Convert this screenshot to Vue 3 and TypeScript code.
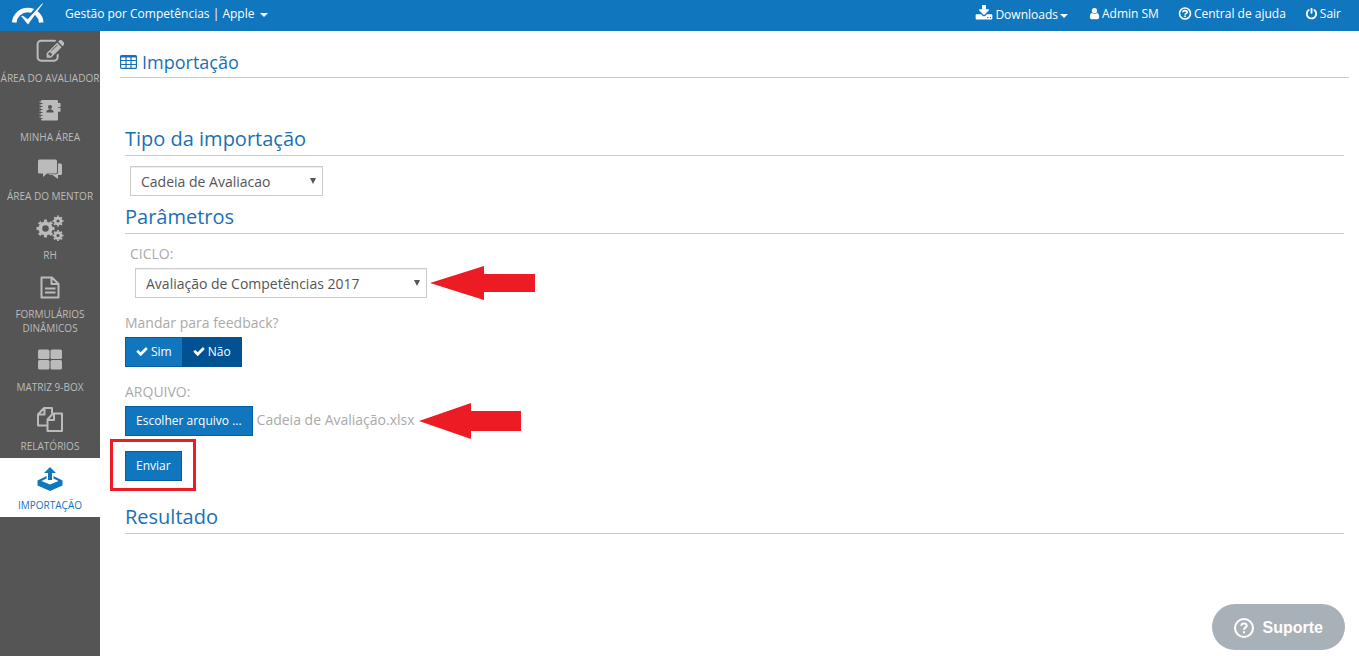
<script setup lang="ts">
import { ref } from 'vue'

interface MenuItem {
  id: string
  label: string
}

const menu: MenuItem[] = [
  { id: 'edit', label: 'Área do avaliador' },
  { id: 'book', label: 'Minha área' },
  { id: 'chat', label: 'Área do mentor' },
  { id: 'gears', label: 'RH' },
  { id: 'file', label: 'Formulários dinâmicos' },
  { id: 'grid', label: 'Matriz 9-Box' },
  { id: 'copy', label: 'Relatórios' },
  { id: 'upload', label: 'Importação' },
]

const active = ref('upload')
const importType = ref('Cadeia de Avaliacao')
const cycle = ref('Avaliação de Competências 2017')
const feedback = ref('Não')
const fileName = ref('Cadeia de Avaliação.xlsx')

function pickFile(event: Event): void {
  const files = (event.target as HTMLInputElement).files
  if (files && files.length) fileName.value = files[0].name
}
</script>

<template>
  <div class="page">
    <header class="topbar">
      <a class="logo" href="#" aria-label="Início">
        <svg width="34" height="22" viewBox="0 0 34 22">
          <path d="M3.200 19.500A13.600 13.600 0 0 1 30.300 19.500" fill="none" stroke="#fff" stroke-width="4.600" />
          <path d="M18 15L31.200-.8" fill="none" stroke="#1076be" stroke-width="3.600" />
          <path d="M10 13l2-.3 4.700 3.600L31.400.3l.5.500L17 21.500z" fill="#fff" />
        </svg>
      </a>
      <button class="link company" type="button">Gestão por Competências | Apple <span class="caret"></span></button>
      <nav class="tools">
        <button class="link downloads" type="button">
          <svg width="18" height="18" viewBox="0 100 1792 1792" fill="currentColor"><path d="M1344 1344q0-26-19-45t-45-19-45 19-19 45 19 45 45 19 45-19 19-45zm256 0q0-26-19-45t-45-19-45 19-19 45 19 45 45 19 45-19 19-45zm128-224v320q0 40-28 68t-68 28h-1472q-40 0-68-28t-28-68v-320q0-40 28-68t68-28h465l135 136q58 56 136 56t136-56l136-136h464q40 0 68 28t28 68zm-325-569q17 41-14 70l-448 448q-18 19-45 19t-45-19l-448-448q-31-29-14-70 17-39 59-39h256v-448q0-26 19-45t45-19h256q26 0 45 19t19 45v448h256q42 0 59 39z" /></svg>
          <span class="tool-text">Downloads</span><span class="caret"></span>
        </button>
        <a class="link" href="#">
          <svg width="11" height="12" viewBox="192 128 1408 1650" fill="currentColor"><path d="M1536 1399q0 109-62.500 187t-150.500 78h-854q-88 0-150.500-78t-62.500-187q0-85 8.500-160.500t31.500-152 58.500-131 94-89 134.500-34.500q131 128 313 128t313-128q76 0 134.500 34.500t94 89 58.500 131 31.500 152 8.500 160.500zm-256-887q0 159-112.500 271.500t-271.500 112.500-271.500-112.500-112.500-271.500 112.500-271.500 271.500-112.500 271.500 112.500 112.500 271.500z" /></svg>
          Admin SM
        </a>
        <a class="link" href="#">
          <svg width="14" height="14" viewBox="0 0 14 14" fill="none" stroke="currentColor"><circle cx="7" cy="6.500" r="5.500" stroke-width="1.600" /><path d="M4.900 5.200c.2-2.300 4.300-2.100 4.300 0 0 1.200-2.100 1.200-2.100 2.600M7.100 8.600v1.500" stroke-width="1.700" /></svg>
          Central de ajuda
        </a>
        <a class="link" href="#">
          <svg width="13" height="13" viewBox="0 100 1792 1792" fill="currentColor"><path d="M1664 896q0 156-61 298t-164 245-245 164-298 61-298-61-245-164-164-245-61-298q0-182 80.500-343t226.500-270q43-32 95.500-25t83.500 50q32 42 24.500 94.500t-49.500 84.500q-98 74-151.500 181t-53.500 228q0 104 40.500 198.500t109.500 163.500 163.500 109.500 198.500 40.500 198.500-40.500 163.500-109.500 109.500-163.500 40.500-198.500q0-121-53.500-228t-151.500-181q-42-32-49.500-84.500t24.500-94.500q31-43 84-50t95 25q146 109 226.500 270t80.500 343zm-640-768v640q0 52-38 90t-90 38-90-38-38-90v-640q0-52 38-90t90-38 90 38 38 90z" /></svg>
          Sair
        </a>
      </nav>
    </header>

    <div class="body">
      <nav class="sidebar">
        <a v-for="item in menu" :key="item.id" href="#" class="item" :class="{ active: item.id === active }" @click.prevent="active = item.id">
          <svg v-if="item.id === 'edit'" width="28" height="28" viewBox="-40 -40 1792 1792" fill="currentColor"><path d="M888 1184l116-116-152-152-116 116v56h96v96h56zm440-720q-16-16-33 1l-350 350q-17 17-1 33t33-1l350-350q17-17 1-33zm80 594v190q0 119-84.500 203.500t-203.500 84.500h-832q-119 0-203.500-84.500t-84.500-203.500v-832q0-119 84.500-203.500t203.500-84.500h832q63 0 117 25 15 7 18 23 3 17-9 29l-49 49q-14 14-32 8-23-6-45-6h-832q-66 0-113 47t-47 113v832q0 66 47 113t113 47h832q66 0 113-47t47-113v-126q0-13 9-22l64-64q15-15 35-7t20 29zm-96-738l288 288-672 672h-288v-288zm444 132l-92 92-288-288 92-92q28-28 68-28t68 28l152 152q28 28 28 68t-28 68z" /></svg>
          <svg v-else-if="item.id === 'book'" width="28" height="28" viewBox="0 0 28 28">
            <path d="M6 4h15q1 0 1 1v18.500q0 1-1 1H6q-1 0-1-1V5q0-1 1-1z" fill="currentColor" />
            <path d="M3.500 6h3M3.500 9h3M3.500 12h3M3.500 15h3M3.500 18h3M3.500 21h3" stroke="currentColor" stroke-width="1" />
            <path d="M4.500 7.500h2M4.500 10.500h2M4.500 13.500h2M4.500 16.500h2M4.500 19.500h2M4.500 22.500h2" stroke="#555" stroke-width="1" />
            <path d="M22 7h2.500v4H22zM22 11.700h2.500v4H22z" fill="currentColor" />
            <circle cx="14" cy="11" r="2" fill="#555" /><path d="M10.500 16.500V15q.5-1.200 3.500-2 3 .8 3.500 2v1.500z" fill="#555" />
          </svg>
          <svg v-else-if="item.id === 'chat'" width="28" height="28" viewBox="0 0 28 28" fill="currentColor">
            <path d="M3.500 4.500h16q1.500 0 1.500 1.500v11q0 1.500-1.500 1.500H11L7 22v-3.500H3.500Q2 18.500 2 17V6q0-1.500 1.500-1.500z" />
            <path d="M22 8.500h2.500q1.500 0 1.500 1.500v8.500q0 1.500-1.500 1.500H22v4l-5.500-4h-4l1-.7h6.500q2 0 2-2z" />
          </svg>
          <svg v-else-if="item.id === 'gears'" width="28" height="28" viewBox="0 0 28 28" fill="none" stroke="currentColor">
            <circle cx="9.500" cy="14.500" r="5.200" stroke-width="3.800" /><circle cx="9.500" cy="14.500" r="7.700" stroke-width="2.600" pathLength="16" stroke-dasharray="1 1" stroke-dashoffset=".5" />
            <circle cx="22" cy="7" r="2.900" stroke-width="2.600" /><circle cx="22" cy="7" r="4.600" stroke-width="1.800" pathLength="16" stroke-dasharray="1 1" stroke-dashoffset=".5" />
            <circle cx="22" cy="21.500" r="2.900" stroke-width="2.600" /><circle cx="22" cy="21.500" r="4.600" stroke-width="1.800" pathLength="16" stroke-dasharray="1 1" stroke-dashoffset=".5" />
          </svg>
          <svg v-else-if="item.id === 'file'" width="28" height="28" viewBox="0 0 28 28" fill="none" stroke="currentColor" stroke-width="2">
            <path d="M5.500 4.500H16L22.500 11v13.500h-17zM15.500 4.500V11h7M9 15.500h10.500M9 19.500h10.500" stroke-linejoin="round" />
          </svg>
          <svg v-else-if="item.id === 'grid'" width="28" height="28" viewBox="0 0 28 28" fill="currentColor">
            <rect x="2" y="3.500" width="11.500" height="9.500" rx="1.500" /><rect x="14.500" y="3.500" width="11.500" height="9.500" rx="1.500" /><rect x="2" y="14" width="11.500" height="9.500" rx="1.500" /><rect x="14.500" y="14" width="11.500" height="9.500" rx="1.500" />
          </svg>
          <svg v-else-if="item.id === 'copy'" width="28" height="28" viewBox="0 0 28 28" fill="none" stroke="currentColor" stroke-width="2" stroke-linejoin="round">
            <path d="M10.500 20.500H2V9.500L8 3h8v5.500M8.500 3v6.500H2M17 8.500h9V26H11.500V14.500zM18 8.500V15h-6.500" />
          </svg>
          <svg v-else width="28" height="28" viewBox="0 0 28 28" fill="currentColor">
            <path d="M14 3l6 6h-4v7h-4V9H8z" />
            <path d="M10.500 12v2.500L5.500 17l8.500 3.500 8.500-3.500-5-2.500V12l9 4.500v5L14 27 1.500 21.500v-5z" />
          </svg>
          <span class="item-label">{{ item.label }}</span>
        </a>
      </nav>

      <main class="main">
        <h1 class="title">
          <svg width="17" height="14" viewBox="0 0 17 14" fill="none" stroke="currentColor"><rect x=".6" y=".6" width="15.800" height="12.800" rx="1" stroke-width="1.200" /><path d="M1 1.500h15" stroke-width="2" /><path d="M1 5.500h15M1 9.500h15M6 1v12M11 1v12" stroke-width="1.200" /></svg>
          Importação
        </h1>

        <form class="content" @submit.prevent>
          <h2 class="section">Tipo da importação</h2>
          <div class="type-row">
            <div class="picker type">
              <select v-model="importType" aria-label="Tipo da importação"><option>Cadeia de Avaliacao</option></select>
              <span class="arrow"></span>
            </div>
          </div>

          <h2 class="section">Parâmetros</h2>
          <div class="cycle">
            <label for="cycle">CICLO:</label>
            <div class="row cycle-row">
              <div class="picker cycle-picker">
                <select id="cycle" v-model="cycle"><option>Avaliação de Competências 2017</option></select>
                <span class="arrow"></span>
              </div>
              <svg class="pointer" width="105" height="34" viewBox="0 0 105 34" fill="#ed1c24"><path d="M0 17L54 0v8h51v18H54v8z" /></svg>
            </div>
          </div>

          <fieldset class="feedback">
            <legend>Mandar para feedback?</legend>
            <div class="toggle">
              <label v-for="choice in ['Sim', 'Não']" :key="choice" class="btn choice" :class="{ on: feedback === choice }">
                <input v-model="feedback" class="hidden" type="radio" name="feedback" :value="choice" />
                <svg width="12" height="12" viewBox="60 280 1672 1400" fill="currentColor"><path d="M1671 566q0 40-28 68l-724 724-136 136q-28 28-68 28t-68-28l-136-136-362-362q-28-28-28-68t28-68l136-136q28-28 68-28t68 28l294 295 656-657q28-28 68-28t68 28l136 136q28 28 28 68z" /></svg>
                {{ choice }}
              </label>
            </div>
          </fieldset>

          <div class="upload">
            <span>ARQUIVO:</span>
            <div class="row">
              <label class="btn">Escolher arquivo ...<input class="hidden" type="file" @change="pickFile" /></label>
              <span class="file-name">{{ fileName }}</span>
              <svg class="pointer" width="102" height="36" viewBox="0 0 102 36" fill="#ed1c24"><path d="M0 18L52 0v8h50v20H52v8z" /></svg>
            </div>
          </div>

          <div class="submit">
            <button class="btn" type="submit">Enviar</button>
            <span class="highlight"></span>
          </div>

          <h2 class="section result">Resultado</h2>
        </form>
      </main>
    </div>

    <button class="support" type="button">
      <svg width="22" height="22" viewBox="0 0 22 22" fill="none" stroke="currentColor" stroke-width="2"><circle cx="11" cy="11" r="9" /><path d="M8.300 8.800c.2-3.300 5.500-3 5.400 0 0 2-2.700 1.800-2.700 4M11 14.200v2" /></svg>
      Suporte
    </button>
  </div>
</template>

<style>
body {
  margin: 0;
  background: #fff;
}
</style>

<style scoped>
* {
  box-sizing: border-box;
}
.page {
  display: flex;
  flex-direction: column;
  min-height: 100vh;
  font: 14px/20px "Open Sans", sans-serif;
  color: #aaa;
}
svg {
  flex: none;
}
button, select {
  font-family: inherit;
}
.topbar {
  display: flex;
  align-items: center;
  height: 31px;
  padding: 0 18px 3px 11px;
  background: #1076be;
}
.logo {
  display: flex;
  width: 54px;
}
.link {
  display: flex;
  align-items: center;
  gap: 2px;
  padding: 0;
  border: 0;
  background: none;
  color: #fff;
  font-size: 12px;
  line-height: 20px;
  text-decoration: none;
  white-space: nowrap;
}
.caret {
  border: 4px solid transparent;
  border-top-color: #fff;
  border-bottom: 0;
}
.company {
  gap: 6px;
}
.company .caret {
  margin-top: 2px;
}
.tools {
  display: flex;
  gap: 19px;
  margin-left: auto;
}
.downloads {
  padding-right: 2px;
}
.downloads .caret {
  margin-top: 3px;
}
.tool-text {
  padding-top: 1px;
}
.body {
  display: flex;
  flex: 1;
}
.sidebar {
  flex: none;
  width: 100px;
  background: #555;
}
.item {
  display: flex;
  flex-direction: column;
  align-items: center;
  gap: 6px;
  padding: 6px 0 5px;
  color: #bbb;
  font-size: 10px;
  line-height: 14px;
  text-align: center;
  text-decoration: none;
  text-transform: uppercase;
}
.item.active {
  background: #fff;
  color: #1076be;
}
.main {
  flex: 1;
  padding: 21px 10px 20px 20px;
}
.title, .section {
  margin: 0;
  border-bottom: 1px solid #ccc;
  color: #1a70b5;
  font-weight: 400;
}
.title {
  display: flex;
  align-items: center;
  gap: 5px;
  height: 26px;
  padding-bottom: 6px;
  font-size: 18px;
}
.content {
  padding: 48px 5px 0;
}
.section {
  height: 30px;
  font-size: 20px;
  line-height: 26px;
}
.type-row {
  padding: 10px 5px 8px;
}
.picker {
  position: relative;
  height: 30px;
}
.picker select {
  appearance: none;
  width: 100%;
  height: 30px;
  padding: 0 26px 0 10px;
  border: 1px solid #ccc;
  border-radius: 0;
  background: #fff;
  box-shadow: inset 0 1px 1px #eee;
  color: #555;
  font-size: 14px;
}
.arrow {
  position: absolute;
  top: 12px;
  right: 7px;
  border: 3px solid transparent;
  border-top: 6px solid #555;
  border-bottom: 0;
  pointer-events: none;
}
.type {
  width: 193px;
}
.cycle-picker {
  width: 292px;
}
.cycle {
  padding: 10px 5px 0;
}
.cycle label {
  display: block;
}
.row {
  display: flex;
  align-items: center;
  height: 30px;
}
.cycle-row {
  gap: 3px;
  margin: 4px 0 0 5px;
}
.feedback {
  margin: 15px 0 0;
  padding: 0;
  border: 0;
}
.feedback legend {
  padding: 0;
}
.toggle {
  display: flex;
  margin-top: 4px;
}
.btn {
  display: inline-flex;
  align-items: center;
  height: 30px;
  padding: 0 10px;
  border: 1px solid #005fa8;
  background: #1076be;
  color: #fff;
  font-size: 12px;
  line-height: 18px;
  white-space: nowrap;
}
.choice {
  gap: 3px;
}
.choice:first-child {
  border-right: 0;
}
.btn.on {
  border-color: #005293;
  background: #005293;
}
.hidden {
  position: absolute;
  width: 1px;
  height: 1px;
  margin: 0;
  opacity: 0;
}
.upload {
  margin-top: 15px;
}
.upload .row {
  margin-top: 4px;
}
.file-name {
  margin: 0 4px 2px;
}
.submit {
  position: relative;
  display: table;
  margin-top: 15px;
}
.highlight {
  position: absolute;
  inset: -12px -14px -10px -15px;
  border: 3px solid #ed1c24;
  pointer-events: none;
}
.result {
  margin-top: 23px;
}
.support {
  position: fixed;
  right: 14px;
  bottom: 6px;
  display: flex;
  align-items: center;
  gap: 8px;
  height: 46px;
  padding: 1px 22px 0 21px;
  border: 0;
  border-radius: 23px;
  background: #a8b0b8;
  color: #fff;
  font: 700 16px/20px "Liberation Sans", Arial, sans-serif;
}
</style>
